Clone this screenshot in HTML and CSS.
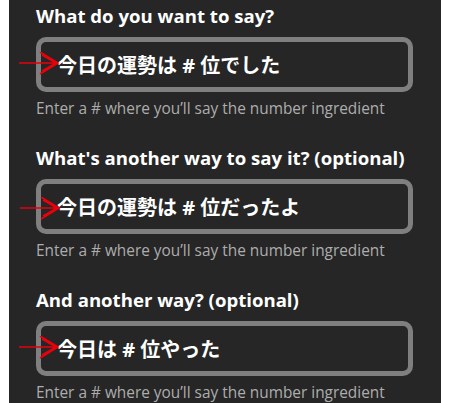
FILE: index.html
```html
<!DOCTYPE html>
<html lang="ja">
<head>
    <meta charset="UTF-8">
    <meta name="viewport" content="width=device-width, initial-scale=1.0">
    <title>Number ingredient</title>
    <link rel="stylesheet" href="styles.css">
</head>
<body>
    <div class="panel">
        <div class="field">
            <h3>What do you want to say?</h3>
            <div class="input-box">
                <svg class="arrow" width="44" height="24" viewBox="0 0 44 24"><path d="M0 11 H38 M21 0 L39 11 L21 22 M23 3 L37 11 L23 19" fill="none" stroke="#e8000b" stroke-width="1.7"/></svg>
                <span class="value">今日の運勢は # 位でした</span>
            </div>
            <p class="hint">Enter a # where you’ll say the number ingredient</p>
        </div>

        <div class="field">
            <h3>What's another way to say it? (optional)</h3>
            <div class="input-box">
                <svg class="arrow arrow-low" width="44" height="24" viewBox="0 0 44 24"><path d="M0 11 H38 M21 0 L39 11 L21 22 M23 3 L37 11 L23 19" fill="none" stroke="#e8000b" stroke-width="1.7"/></svg>
                <span class="value">今日の運勢は # 位だったよ</span>
            </div>
            <p class="hint">Enter a # where you’ll say the number ingredient</p>
        </div>

        <div class="field">
            <h3>And another way? (optional)</h3>
            <div class="input-box">
                <svg class="arrow" width="44" height="24" viewBox="0 0 44 24"><path d="M0 11 H38 M21 0 L39 11 L21 22 M23 3 L37 11 L23 19" fill="none" stroke="#e8000b" stroke-width="1.7"/></svg>
                <span class="value">今日は # 位やった</span>
            </div>
            <p class="hint">Enter a # where you’ll say the number ingredient</p>
        </div>
    </div>
</body>
</html>
```

FILE: styles.css
```css
body {
    margin: 0;
    background: #ffffff;
    font-family: 'Open Sans', 'Noto Sans CJK JP', sans-serif;
}
.panel {
    background: #262626;
    margin-left: 9px;
    width: 432px;
    height: 403px;
    padding: 4px 0 0 27px;
    box-sizing: border-box;
    overflow: hidden;
}
.field {
    margin-bottom: 27px;
}
.field h3 {
    margin: 0;
    color: #ffffff;
    font-size: 18.6px;
    font-weight: 700;
    line-height: 24px;
}
.input-box {
    position: relative;
    margin-top: 9px;
    width: 377px;
    height: 55px;
    border: 5px solid #7f7f7f;
    border-radius: 10px;
    box-sizing: border-box;
    display: flex;
    align-items: center;
    padding-left: 16px;
}
.value {
    color: #ffffff;
    font-family: 'Open Sans', 'Noto Sans CJK JP', sans-serif;
    font-size: 20px;
    font-weight: 700;
}
.arrow {
    position: absolute;
    left: -22px;
    top: 10px;
}
.arrow-low {
    left: -21px;
    top: 13px;
}
.hint {
    margin: 7px 0 0;
    color: #adadad;
    font-size: 15.4px;
    line-height: 20px;
}
```
